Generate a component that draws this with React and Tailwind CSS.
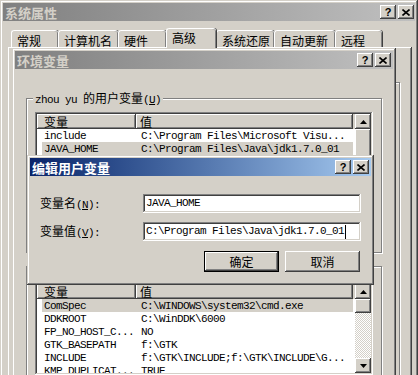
const WIN = "shadow-[inset_-1px_-1px_#404040,inset_1px_1px_#d4d0c8,inset_-2px_-2px_#808080,inset_2px_2px_#ffffff]";
const BTN = "shadow-[inset_-1px_-1px_#404040,inset_1px_1px_#ffffff,inset_-2px_-2px_#808080,inset_2px_2px_#d4d0c8]";
const SUNK = "shadow-[inset_-1px_-1px_#ffffff,inset_1px_1px_#808080,inset_-2px_-2px_#d4d0c8,inset_2px_2px_#404040]";
const MONO = "font-['Liberation_Mono',monospace] text-[11px] tracking-[-0.6px]";
const CJK = "font-['Noto_Sans_CJK_SC',sans-serif]";

const tabs = [
    { label: "常规", w: "w-[47px]" },
    { label: "计算机名", w: "w-[60px]" },
    { label: "硬件", w: "w-[48px]" },
    { label: "高级", w: "w-[50px]", active: true },
    { label: "系统还原", w: "w-[58px]" },
    { label: "自动更新", w: "w-[61px]" },
    { label: "远程", w: "w-[47px]" },
];

const userVars = [
    { name: "include", value: "C:\\Program Files\\Microsoft Visu..." },
    { name: "JAVA_HOME", value: "C:\\Program Files\\Java\\jdk1.7.0_01", selected: true },
    { name: "TEMP", value: "%USERPROFILE%\\Local Settings\\Temp" },
    { name: "TMP", value: "%USERPROFILE%\\Local Settings\\Temp" },
];

const sysVars = [
    { name: "ComSpec", value: "C:\\WINDOWS\\system32\\cmd.exe", selected: true },
    { name: "DDKROOT", value: "C:\\WinDDK\\6000" },
    { name: "FP_NO_HOST_C...", value: "NO" },
    { name: "GTK_BASEPATH", value: "f:\\GTK" },
    { name: "INCLUDE", value: "f:\\GTK\\INCLUDE;f:\\GTK\\INCLUDE\\G..." },
    { name: "KMP_DUPLICAT...", value: "TRUE" },
    { name: "LIB", value: "f:\\GTK\\LIB" },
];

function CapButton({ children }) {
    return (
        <div className={`flex h-[14px] w-[16px] items-center justify-center bg-[#d4d0c8] text-black ${BTN}`}>
            {children}
        </div>
    );
}

function TitleBar({ title, active, pr = "pr-[2px]" }) {
    const bg = active
        ? "bg-linear-to-r from-[#0a246a] to-[#a6caf0] text-white"
        : "bg-linear-to-r from-[#808080] to-[#c0c0c0] text-[#d4d0c8]";
    return (
        <div className={`flex h-[18px] items-center justify-between pl-[2px] ${pr} ${bg}`}>
            <span className={`${CJK} text-[13px] font-bold leading-none`}>{title}</span>
            <div className="flex gap-[2px]">
                <CapButton>
                    <span className="font-['Liberation_Sans',sans-serif] text-[11px] font-bold leading-none">?</span>
                </CapButton>
                <CapButton>
                    <svg width="8" height="7" viewBox="0 0 8 7">
                        <path d="M0.5 0.5 L7.5 6.5 M7.5 0.5 L0.5 6.5" stroke="black" strokeWidth="1.6" />
                    </svg>
                </CapButton>
            </div>
        </div>
    );
}

function Arrow({ down }) {
    return (
        <svg width="7" height="4" viewBox="0 0 7 4">
            <path d={down ? "M0 0 H7 L3.5 4 Z" : "M3.5 0 L7 4 H0 Z"} fill="black" />
        </svg>
    );
}

function ListView({ rows, h, thumb }) {
    return (
        <div className={`flex ${h} w-[338px] bg-white p-[2px] ${SUNK}`}>
            <div className="flex flex-1 flex-col overflow-hidden">
                <div className={`flex h-[15px] shrink-0 text-[12px] leading-[15px] ${CJK}`}>
                    <div className={`w-[99px] bg-[#d4d0c8] pl-[7px] ${BTN}`}>变量</div>
                    <div className={`w-[217px] bg-[#d4d0c8] pl-[4px] ${BTN}`}>值</div>
                    <div className="flex-1 bg-[#d4d0c8]" />
                </div>
                {rows.map((r) => (
                    <div key={r.name} className={`flex h-[13px] shrink-0 leading-[13px] ${MONO}`}>
                        <div className={`ml-[5px] flex w-[311px] pt-[1px] ${r.selected ? "bg-[#d4d0c8]" : ""}`}>
                            <div className="w-[94px] pl-[2px] whitespace-nowrap">{r.name}</div>
                            <div className="pl-[5px] whitespace-nowrap">{r.value}</div>
                        </div>
                    </div>
                ))}
            </div>
            <div className="flex w-[16px] flex-col">
                <div className={`flex h-[15px] shrink-0 items-center justify-center bg-[#d4d0c8] ${BTN}`}>
                    <Arrow />
                </div>
                <div className={`${thumb} shrink-0 bg-[#d4d0c8] ${BTN}`} />
                <div className="flex-1 bg-[image:repeating-conic-gradient(#ffffff_0_25%,#d4d0c8_0_50%)] bg-[length:2px_2px]" />
                <div className={`flex h-[15px] shrink-0 items-center justify-center bg-[#d4d0c8] ${BTN}`}>
                    <Arrow down />
                </div>
            </div>
        </div>
    );
}

function GroupBox({ label, className, children }) {
    return (
        <div className={`relative ml-[11px] w-[356px] border border-[#808080] pl-[8px] shadow-[inset_1px_1px_#ffffff,1px_1px_#ffffff] ${className}`}>
            <div className="absolute -top-[9px] left-[6px] bg-[#d4d0c8] px-[2px] text-[12px] leading-[16px] whitespace-nowrap">
                {label}
            </div>
            {children}
        </div>
    );
}

function Field({ label, hotkey, value, caret }) {
    return (
        <div className="flex h-[19px] items-center">
            <div className="w-[103px] text-[12px] whitespace-nowrap">
                <span className={CJK}>{label}</span>
                <span className={MONO}>
                    (<span className="underline">{hotkey}</span>):
                </span>
            </div>
            <div className={`flex h-[19px] w-[218px] items-center bg-white pl-[3px] ${SUNK}`}>
                <span className={`${MONO} leading-none whitespace-nowrap`}>{value}</span>
                {caret && <span className="ml-[1px] inline-block h-[14px] w-[1px] bg-black" />}
            </div>
        </div>
    );
}

export default function App() {
    return (
        <div className={`relative h-[375px] w-[418px] overflow-hidden bg-[#d4d0c8] text-black ${CJK}`}>
            {/* 系统属性 */}
            <div className={`absolute left-0 top-0 h-[400px] w-[418px] bg-[#d4d0c8] p-[3px] ${WIN}`}>
                <TitleBar title="系统属性" pr="pr-[1px]" />
                <div className="mt-[7px] flex h-[19px] items-end pl-[8px]">
                    {tabs.map((t) => (
                        <div
                            key={t.label}
                            className={`${t.w} rounded-t-[3px] border-l border-t border-white bg-[#d4d0c8] pl-[5px] text-[12px] leading-[15px] shadow-[inset_-1px_0_#808080,1px_0_#404040] ${
                                t.active ? "relative z-10 -mb-[1px] h-[20px] pt-[1px]" : "h-[17px] pt-[2px]"
                            }`}
                        >
                            {t.label}
                        </div>
                    ))}
                </div>
                <div className="ml-[5px] h-[400px] w-[403px] border-l border-t border-white pt-[34px] pl-[8px] shadow-[inset_-1px_0_#808080,1px_0_#404040]">
                    {/* group box of the 高级 page, mostly hidden */}
                    <div className="h-[300px] w-[383px] border border-[#808080] shadow-[inset_1px_1px_#ffffff,1px_1px_#ffffff]" />
                </div>
            </div>

            {/* 环境变量 */}
            <div className={`absolute left-[12px] top-[48px] h-[400px] w-[384px] bg-[#d4d0c8] p-[3px] ${WIN}`}>
                <TitleBar title="环境变量" />
                <GroupBox
                    className="mt-[29px] h-[155px] pt-[13px]"
                    label={
                        <>
                            <span className={MONO}>zhou yu </span>
                            的用户变量
                            <span className={MONO}>
                                (<span className="underline">U</span>)
                            </span>
                        </>
                    }
                >
                    <ListView rows={userVars} h="h-[132px]" thumb="h-[60px]" />
                </GroupBox>
                <GroupBox
                    className="mt-[13px] h-[200px] pt-[15px]"
                    label={
                        <>
                            系统变量
                            <span className={MONO}>
                                (<span className="underline">S</span>)
                            </span>
                        </>
                    }
                >
                    <ListView rows={sysVars} h="h-[93px]" thumb="h-[14px]" />
                </GroupBox>
            </div>

            {/* 编辑用户变量 */}
            <div className={`absolute left-[27px] top-[155px] z-20 h-[130px] w-[347px] bg-[#d4d0c8] p-[3px] ${WIN}`}>
                <TitleBar title="编辑用户变量" active />
                <div className="flex flex-col pl-[10px] pt-[18px]">
                    <Field label="变量名" hotkey="N" value="JAVA_HOME" />
                    <div className="mt-[9px]">
                        <Field label="变量值" hotkey="V" value="C:\Program Files\Java\jdk1.7.0_01" caret />
                    </div>
                    <div className="mt-[10px] flex gap-[6px] pl-[164px]">
                        <div className="h-[21px] w-[75px] border border-black">
                            <div className={`flex h-full items-center justify-center bg-[#d4d0c8] text-[12px] ${BTN}`}>确定</div>
                        </div>
                        <div className={`flex h-[21px] w-[75px] items-center justify-center bg-[#d4d0c8] text-[12px] ${BTN}`}>取消</div>
                    </div>
                </div>
            </div>
        </div>
    );
}
